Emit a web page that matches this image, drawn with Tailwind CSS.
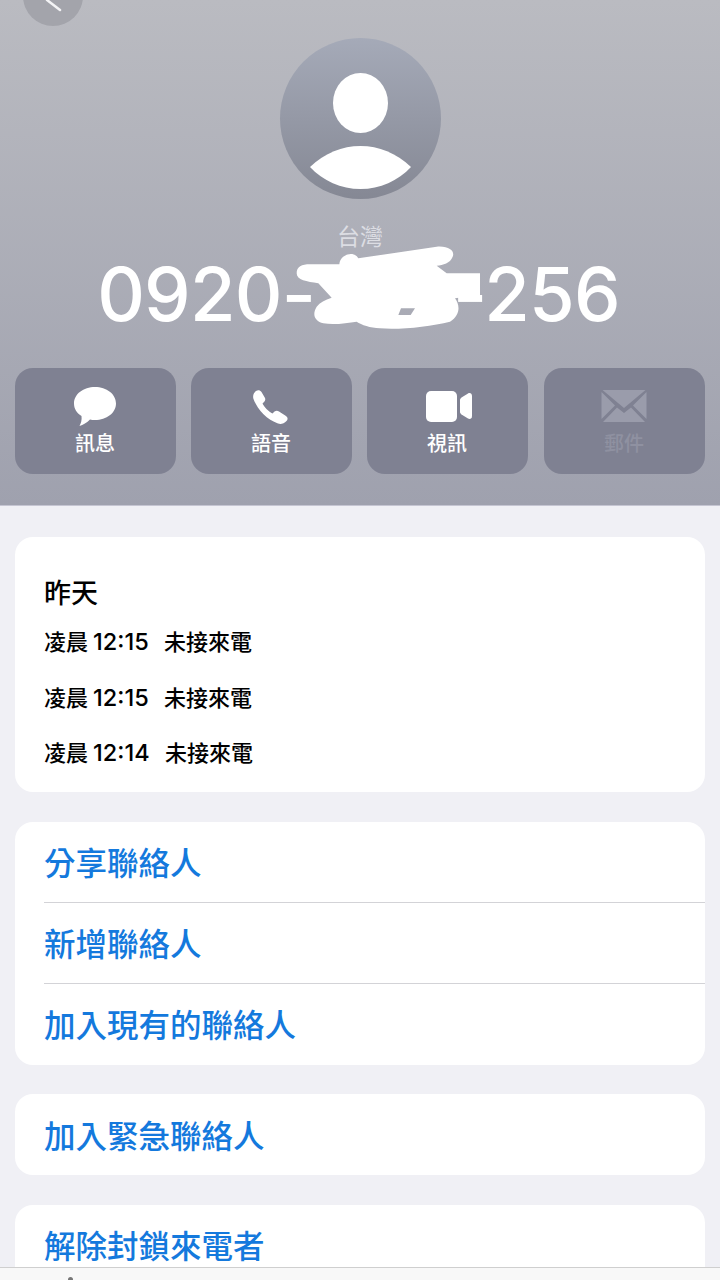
<!DOCTYPE html>
<html lang="zh-Hant">
<head>
<meta charset="utf-8">
<script src="https://cdn.jsdelivr.net/npm/@tailwindcss/browser@4"></script>
</head>
<body class="m-0">
<div class="relative w-[720px] h-[1280px] overflow-hidden bg-[#f0f0f5] font-['Inter','Noto_Sans_CJK_TC',sans-serif]">
  <header class="relative h-[506px] bg-gradient-to-b from-[#babbc1] to-[#9fa1ae] border-b border-[#c5c5d2] flex flex-col items-center pt-[38px]">
    <div class="absolute left-[23px] top-[-34px] w-[60px] h-[60px] rounded-full bg-[#a3a4ab]">
      <svg width="60" height="60" viewBox="0 0 60 60" fill="none"><path d="M24 34 L37 44" stroke="#f4f4f6" stroke-width="2.500" stroke-linecap="round"/></svg>
    </div>
    <div class="w-[161px] h-[161px] shrink-0 rounded-full bg-gradient-to-b from-[#a5aab8] to-[#858894] overflow-hidden">
      <svg width="161" height="161" viewBox="0 0 161 161"><ellipse cx="80.500" cy="65" rx="27.500" ry="30" fill="#fff"/><path d="M30 129 C45 115 62 108 80.500 108 C99 108 116 115 131 129 C118 143 100 151 80.500 151 C61 151 43 143 30 129 Z" fill="#fff"/></svg>
    </div>
    <div class="mt-[23px] text-[23px] leading-[30px] text-[#dcdde3]">台灣</div>
    <div class="h-[84px] pr-[3px] flex items-center text-white text-[74px] tracking-[-0.8px] leading-[84px] font-medium whitespace-nowrap">
      <span>0920-</span><span class="inline-block w-[138px]"></span><span>-256</span>
    </div>
    <svg class="absolute left-[290px] top-[215px]" width="200" height="125" viewBox="0 0 600 375" fill="#fff" fill-rule="evenodd"><path d="M20 175 C20 155 35 148 60 148 L148 148 C150 120 190 105 205 130 L440 95 C480 92 495 110 488 125 C480 145 460 150 440 152 L470 175 L570 175 L570 240 L495 250 C510 270 512 300 480 320 C420 335 330 345 270 340 C240 338 215 330 200 320 C170 325 130 330 100 325 C75 318 65 300 80 275 C90 262 105 255 125 248 L85 205 C50 200 20 195 20 175 Z M325 300 L333 280 L375 280 L362 300 Z"/></svg>
    <nav class="mt-[32px] w-full px-[15px] grid grid-cols-[repeat(4,161px)] gap-[15px]">
      <div class="h-[106px] pr-px rounded-[18px] bg-[#7f8192] flex flex-col items-center pt-[17px] text-white">
        <svg width="44" height="42" viewBox="0 0 44 42" fill="#fff"><path d="M22 2C33.500 2 43 9 43 18.500C43 28 33.500 35 22 35C20 35 18.500 34.800 17 34.400C14 37.500 10 40 6.500 41C8 38 9 35 8.500 31C3.500 28 1 23.500 1 18.500C1 9 10.500 2 22 2Z"/></svg>
        <span class="mt-[3px] text-[20px] leading-[28px] font-medium">訊息</span>
      </div>
      <div class="h-[106px] pr-px rounded-[18px] bg-[#7f8192] flex flex-col items-center pt-[17px] text-white">
        <svg width="44" height="42" viewBox="0 0 44 42" fill="#fff"><path d="M7 6 C9 4.500 11 5 12.500 7 L16 13 C16.700 14.500 16 16 15 17 L13.500 18.500 C15 22 20 27 23.500 28.500 L25.500 26.500 C27 25.500 28.500 25.500 30 26.500 L37 31 C39 32.500 39 34.500 37.500 36 C35 38.500 32 39.500 29 38.500 C18 35 8 24 4.500 14 C3.500 11 4.500 8 7 6Z"/></svg>
        <span class="mt-[3px] text-[20px] leading-[28px] font-medium">語音</span>
      </div>
      <div class="h-[106px] pr-px rounded-[18px] bg-[#7f8192] flex flex-col items-center pt-[17px] text-white">
        <svg width="50" height="42" viewBox="0 0 50 42" fill="#fff"><g transform="translate(3.500 0)"><rect x="0.500" y="6" width="31" height="31" rx="5"/><path d="M34.500 15 C34.500 14 35 13.500 36 12.500 L42.500 8.500 C44.500 7.500 46.500 8.500 46.500 11 V31 C46.500 33.500 44.500 34.500 42.500 33.500 L36 29.500 C35 28.500 34.500 28 34.500 27 Z"/></g></svg>
        <span class="mt-[3px] text-[20px] leading-[28px] font-medium">視訊</span>
      </div>
      <div class="ml-px w-[161px] h-[106px] pr-px rounded-[18px] bg-[#7f8192] flex flex-col items-center pt-[17px] text-[#8f91a1]">
        <svg width="46" height="42" viewBox="0 0 46 42" fill="#9a9cab"><path d="M1.500 5H44.500L23 23Z"/><path d="M0.500 7L14 20.500L0.500 34Z"/><path d="M45.500 7L32 20.500L45.500 34Z"/><path d="M16 22.500L23 28L30 22.500L44 37H2Z"/></svg>
        <span class="mt-[3px] text-[20px] leading-[28px] font-medium">郵件</span>
      </div>
    </nav>
  </header>
  <main class="px-[15px] pt-[31px] flex flex-col gap-[30px]">
    <section class="h-[255px] rounded-[18px] bg-white px-[29px] pt-[38px] text-black">
      <h2 class="text-[27px] leading-[38px] font-medium">昨天</h2>
      <ul class="mt-[13px] flex flex-col gap-[23.500px] text-[22px] leading-[32px] font-medium">
        <li class="flex"><span class="w-[120px]">凌晨<span class="ml-[5px] text-[23.500px] font-medium">12:15</span></span><span>未接來電</span></li>
        <li class="flex"><span class="w-[120px]">凌晨<span class="ml-[5px] text-[23.500px] font-medium">12:15</span></span><span>未接來電</span></li>
        <li class="flex"><span class="w-[121px]">凌晨<span class="ml-[5px] text-[23.500px] font-medium">12:14</span></span><span>未接來電</span></li>
      </ul>
    </section>
    <section class="h-[243px] rounded-[18px] bg-white pl-[29px] text-[31.500px] font-medium text-[#1479dd]">
      <div class="h-[81px] flex items-center pt-[3px] border-b border-[#d3d3d7]">分享聯絡人</div>
      <div class="h-[81px] flex items-center pt-[3px] border-b border-[#d3d3d7]">新增聯絡人</div>
      <div class="h-[81px] flex items-center pt-[3px]">加入現有的聯絡人</div>
    </section>
    <section class="-mt-px h-[81px] rounded-[18px] bg-white pl-[29px] pt-[4px] text-[31.500px] font-medium text-[#1479dd] flex items-center">加入緊急聯絡人</section>
    <section class="h-[81px] rounded-[18px] bg-white pl-[29px] pt-[2px] text-[31.500px] font-medium text-[#1479dd] flex items-center">解除封鎖來電者</section>
  </main>
  <footer class="absolute left-0 right-0 bottom-0 h-[13px] bg-[#f8f8f8] border-t border-[#cfcfcf]">
    <div class="absolute left-[68px] top-[9px] w-[5px] h-[5px] rounded-full bg-[#777]"></div>
  </footer>
</div>
</body>
</html>
